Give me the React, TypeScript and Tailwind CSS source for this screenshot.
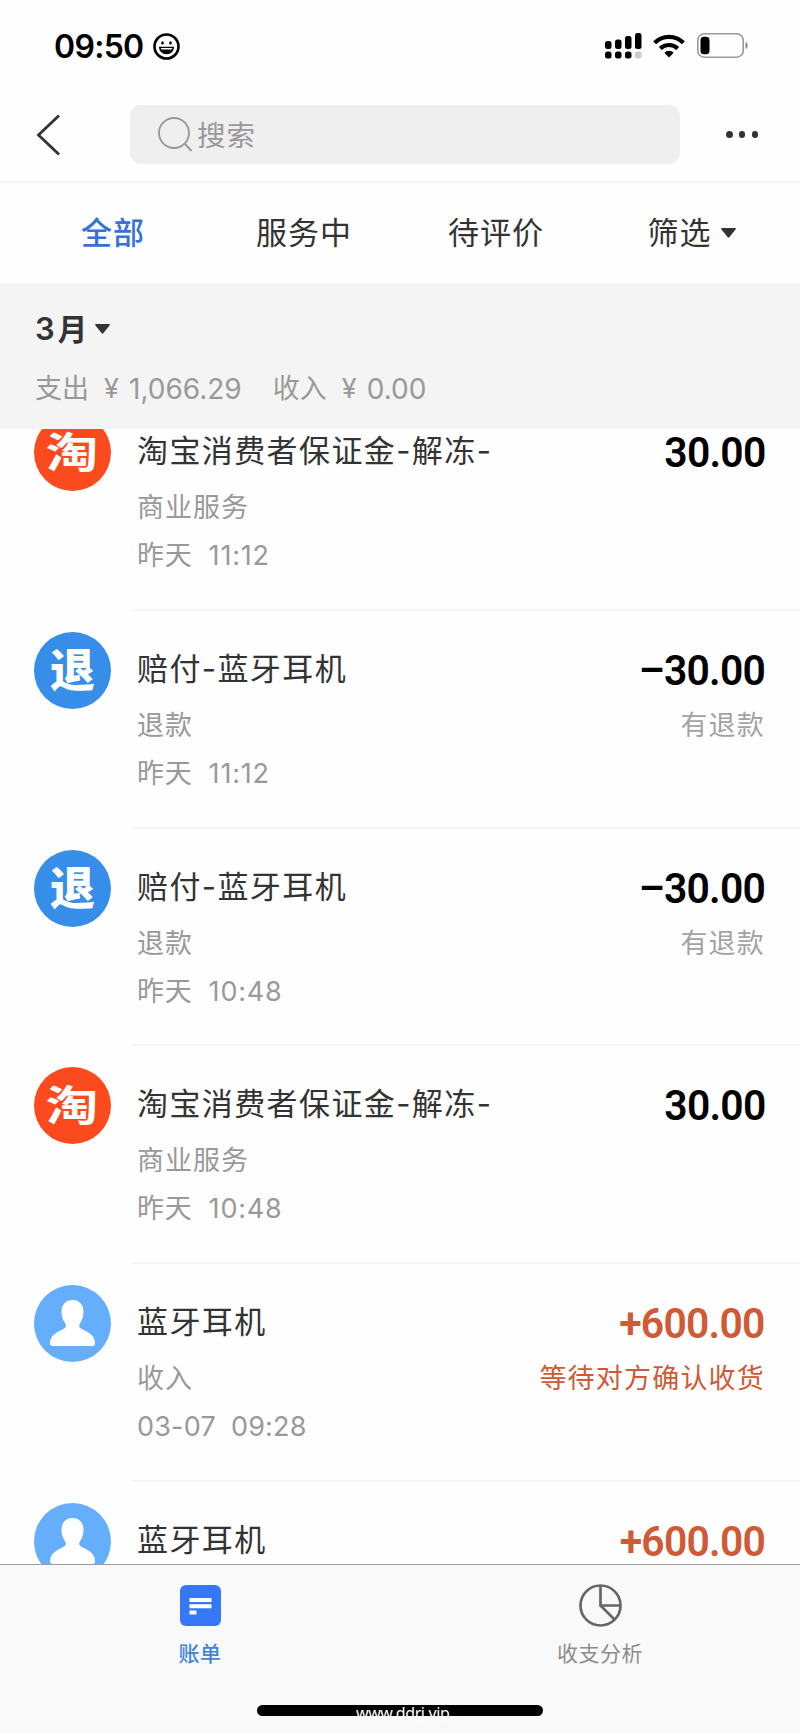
import clsx from 'clsx';

type AvatarKind = 'taobao' | 'refund' | 'person';

interface Bill {
  id: number;
  avatar: AvatarKind;
  title: string;
  category?: string;
  date?: string;
  time?: string;
  amount: string;
  status?: string;
  income?: boolean;
}

const bills: Bill[] = [
  { id: 1, avatar: 'taobao', title: '淘宝消费者保证金-解冻-', category: '商业服务', date: '昨天', time: '11:12', amount: '30.00' },
  { id: 2, avatar: 'refund', title: '赔付-蓝牙耳机', category: '退款', date: '昨天', time: '11:12', amount: '–30.00', status: '有退款' },
  { id: 3, avatar: 'refund', title: '赔付-蓝牙耳机', category: '退款', date: '昨天', time: '10:48', amount: '–30.00', status: '有退款' },
  { id: 4, avatar: 'taobao', title: '淘宝消费者保证金-解冻-', category: '商业服务', date: '昨天', time: '10:48', amount: '30.00' },
  { id: 5, avatar: 'person', title: '蓝牙耳机', category: '收入', date: '03-07', time: '09:28', amount: '+600.00', status: '等待对方确认收货', income: true },
  { id: 6, avatar: 'person', title: '蓝牙耳机', amount: '+600.00', income: true },
];

const tabs = ['全部', '服务中', '待评价', '筛选'];

function Caret() {
  return (
    <svg className="w-[15px] h-[10px]" viewBox="0 0 15 10" fill="#333">
      <path d="M1 0h13c.9 0 1.2.7.7 1.3L8.300 9.300c-.5.600-1.100.600-1.600 0L.3 1.300C-.2.700.1 0 1 0z" />
    </svg>
  );
}

function StatusBar() {
  return (
    <div className="h-[93px] flex items-center justify-between pl-[54px] pr-[52px]">
      <div className="flex items-center gap-[9px]">
        <span className="text-[32px] leading-[40px] font-semibold tracking-[-0.7px] text-black">09:50</span>
        <svg className="w-[27px] h-[27px]" viewBox="0 0 27 27" fill="none">
          <circle cx="13.500" cy="13.500" r="12" stroke="#000" strokeWidth="2.600" />
          <ellipse cx="9.500" cy="9.900" rx="1.300" ry="1.700" fill="#000" />
          <ellipse cx="17.500" cy="9.900" rx="1.300" ry="1.700" fill="#000" />
          <path d="M6 13.800h15c0 4.500-3.200 7.400-7.500 7.400S6 18.300 6 13.800z" fill="#000" />
          <path d="M7.800 15h11.400c-.1.600-.3 1-.6 1.400H8.400c-.3-.4-.5-.8-.6-1.400z" fill="#fff" />
        </svg>
      </div>
      <div className="flex items-center -mt-[2px]">
        <svg className="w-[37px] h-[26px]" viewBox="0 0 37 26" fill="#000">
          <rect x="0" y="8" width="6.500" height="8" rx="2.500" />
          <rect x="10" y="6.500" width="6.500" height="9.500" rx="2.500" />
          <rect x="20" y="3" width="6.500" height="13" rx="2.500" />
          <rect x="30" y="0" width="6.500" height="16" rx="2.500" />
          <rect x="0" y="18.500" width="6.500" height="7" rx="2.500" />
          <rect x="10" y="18.500" width="6.500" height="7" rx="2.500" />
          <rect x="20" y="18.500" width="6.500" height="7" rx="2.500" />
          <rect x="30" y="18.500" width="6.500" height="7" rx="2.500" fill="#ccc" />
        </svg>
        <svg className="w-[32px] h-[24px] ml-[11px]" viewBox="0 0 32 24" fill="none" stroke="#000">
          <path d="M1.600 8.800a20.500 20.500 0 0 1 28.800 0" strokeWidth="4.200" />
          <path d="M7.300 14.500a12.500 12.500 0 0 1 17.400 0" strokeWidth="4.200" />
          <path d="M11.300 18.700a6.800 6.800 0 0 1 9.400 0L16 23.600z" fill="#000" stroke="none" />
        </svg>
        <svg className="w-[51px] h-[25px] ml-[12px]" viewBox="0 0 51 25">
          <rect x=".8" y=".8" width="45.400" height="23.400" rx="6.500" fill="none" stroke="#999" strokeWidth="1.600" />
          <rect x="3.500" y="3.800" width="9" height="17.400" rx="3.500" fill="#000" />
          <path d="M48.500 9v7c1.500-.6 2.200-2 2.200-3.500S50 9.600 48.500 9z" fill="#888" />
        </svg>
      </div>
    </div>
  );
}

function SearchHeader() {
  return (
    <div className="h-[90px] flex items-start border-b-2 border-[#f5f5f5] pt-[12px]">
      <div className="w-[130px] h-[60px] flex items-center pl-[36px]">
        <svg className="w-[24px] h-[42px]" viewBox="0 0 24 42" fill="none">
          <path d="M23 1.500 2.500 21 23 40.500" stroke="#333" strokeWidth="2.800" />
        </svg>
      </div>
      <div className="w-[550px] h-[59px] rounded-[11px] bg-[#efefef] flex items-center pl-[28px]">
        <svg className="w-[35px] h-[35px]" viewBox="0 0 35 35" fill="none" stroke="#999" strokeWidth="1.900">
          <circle cx="16" cy="16" r="15" />
          <path d="m26.500 26.500 7 7.500" />
        </svg>
        <span className="ml-[4px] mt-[2px] text-[28.500px] leading-[40px] tracking-[1px] text-[#999]">搜索</span>
      </div>
      <div className="ml-[46px] h-[59px] flex items-center gap-[6.300px]">
        <span className="w-[6.500px] h-[6.500px] rounded-full bg-[#333]" />
        <span className="w-[6.500px] h-[6.500px] rounded-full bg-[#333]" />
        <span className="w-[6.500px] h-[6.500px] rounded-full bg-[#333]" />
      </div>
    </div>
  );
}

function Tabs() {
  return (
    <div className="h-[100px] grid grid-cols-4 items-center px-[16px]">
      {tabs.map((tab, i) => (
        <div
          key={tab}
          className={clsx(
            'flex items-center justify-center text-[31px] leading-[44px] tracking-[1px]',
            i === 0 ? 'pl-[2px] font-medium text-[#3571d8]' : 'text-[#333]',
            i === 3 && 'gap-[9px] pl-[7px]',
          )}
        >
          {tab}
          {i === 3 && <Caret />}
        </div>
      ))}
    </div>
  );
}

function Summary() {
  return (
    <div className="h-[146px] bg-[#f4f4f4] pl-[35px] pt-[24px]">
      <div className="flex items-center h-[44px] text-[31px] font-semibold text-[#333]">
        3<span className="ml-[3px] text-[29.500px] font-bold">月</span>
        <span className="ml-[8px] flex"><Caret /></span>
      </div>
      <div className="mt-[18px] h-[40px] flex items-center text-[28px] leading-[40px] text-[#999]">
        <span className="text-[27px]">支出</span>
        <span className="ml-[15px] text-[27px] w-[15px]">¥</span>
        <span className="ml-[10px]">1,066.29</span>
        <span className="ml-[31px] text-[27px]">收入</span>
        <span className="ml-[15px] text-[27px] w-[15px]">¥</span>
        <span className="ml-[10px]">0.00</span>
      </div>
    </div>
  );
}

function Avatar({ kind }: { kind: AvatarKind }) {
  if (kind === 'person') {
    return (
      <svg className="w-[77px] h-[77px] shrink-0" viewBox="0 0 77 77">
        <circle cx="38.500" cy="38.500" r="38.500" fill="#64aefb" />
        <path
          d="M38.500 15c6.500 0 11 4.500 11 11.500 0 5.200-1.400 9-3.600 12-1 1.400-.9 3.600.6 4.700 4.500 3 14.600 5.600 14.600 14.800 0 2.200-.9 3-3 3H19c-2.100 0-3-.8-3-3 0-9.200 10.100-11.800 14.600-14.800 1.500-1.100 1.600-3.300.6-4.700-2.200-3-3.700-6.800-3.700-12 0-7 4.500-11.500 11-11.500z"
          fill="#fff"
        />
      </svg>
    );
  }
  return (
    <div
      className={clsx(
        'w-[77px] h-[77px] shrink-0 rounded-full flex items-center justify-center text-white font-bold leading-none',
        kind === 'taobao' ? 'bg-[#fb4b1e]' : 'bg-[#378ee8]',
      )}
    >
      {kind === 'taobao' ? (
        <span className="text-[42px] scale-x-125">淘</span>
      ) : (
        <span className="mt-[1px] text-[45px] font-black">退</span>
      )}
    </div>
  );
}

function BillRow({ bill }: { bill: Bill }) {
  return (
    <div className="h-[217.750px] shrink-0 flex pl-[34px]">
      <div className="pt-[21px]">
        <Avatar kind={bill.avatar} />
      </div>
      <div className="ml-[21px] flex-1 flex justify-between border-b-2 border-[#f5f5f5] pl-[5px] pr-[35px] pt-[36px]">
        <div>
          <div className="text-[31px] leading-[44px] tracking-[1.400px] text-[#333] whitespace-nowrap">{bill.title}</div>
          {bill.category && (
            <div className="mt-[16px] text-[27px] leading-[38px] tracking-[1px] text-[#999]">{bill.category}</div>
          )}
          {bill.date && (
            <div
              className={clsx(
                'mt-[10px] flex text-[27px] leading-[38px] text-[#999]',
                bill.date.includes('-') ? 'gap-[15px] tracking-[0.200px]' : 'gap-[16px] tracking-[0.800px]',
              )}
            >
              <span>{bill.date}</span>
              <span>{bill.time}</span>
            </div>
          )}
        </div>
        <div className={clsx('text-right', bill.income ? 'text-[#cf5a35]' : 'text-black')}>
          <div className="-mt-[2px] origin-right scale-x-95 font-['Roboto'] text-[43px] leading-[51px] font-semibold tracking-[-0.800px]">
            {bill.amount}
          </div>
          {bill.status && (
            <div className={clsx('mt-[11px] text-[27px] leading-[38px] tracking-[1.200px]', !bill.income && 'text-[#a3a3a3]')}>
              {bill.status}
            </div>
          )}
        </div>
      </div>
    </div>
  );
}

function BottomNav() {
  return (
    <div className="relative h-[169px] border-t border-[#9c9c9c] bg-[#f9f9fa] grid grid-cols-2">
      <div className="flex flex-col items-center pt-[20px]">
        <svg className="w-[41px] h-[41px]" viewBox="0 0 41 41">
          <rect width="41" height="41" rx="6" fill="#3478f8" />
          <path d="M9.500 13h22v4h-22zM9.500 19.300h22v4h-22zM9.500 25.500h7v4h-7z" fill="#fff" />
        </svg>
        <span className="mt-[12px] text-[21px] leading-[32px] tracking-[0.500px] font-medium text-[#4283d6]">账单</span>
      </div>
      <div className="flex flex-col items-center pt-[19px]">
        <svg className="w-[43px] h-[43px]" viewBox="0 0 43 43" fill="none" stroke="#666" strokeWidth="2.700">
          <circle cx="21.500" cy="21.500" r="20" />
          <path d="M21.500 1.500v20h20M21.500 21.500l14 14" />
        </svg>
        <span className="mt-[11px] text-[21px] leading-[32px] tracking-[0.500px] text-[#8c8c8c]">收支分析</span>
      </div>
      <div className="absolute left-[257px] top-[140px] w-[286px] h-[11px] rounded-full bg-black" />
      <span className="absolute left-[356px] top-[136px] text-[16px] leading-[24px] tracking-[-0.400px] text-white font-['Noto_Sans'] whitespace-nowrap">
        www.ddrj.vip
      </span>
    </div>
  );
}

export default function App() {
  return (
    <div className="w-[800px] h-[1733px] flex flex-col overflow-hidden bg-[#fefefe] font-['Inter','Noto_Sans_CJK_SC',sans-serif]">
      <StatusBar />
      <SearchHeader />
      <Tabs />
      <Summary />
      <div className="flex-1 min-h-0 overflow-hidden">
        <div className="-mt-[36px] flex flex-col">
          {bills.map((bill) => (
            <BillRow key={bill.id} bill={bill} />
          ))}
        </div>
      </div>
      <BottomNav />
    </div>
  );
}
